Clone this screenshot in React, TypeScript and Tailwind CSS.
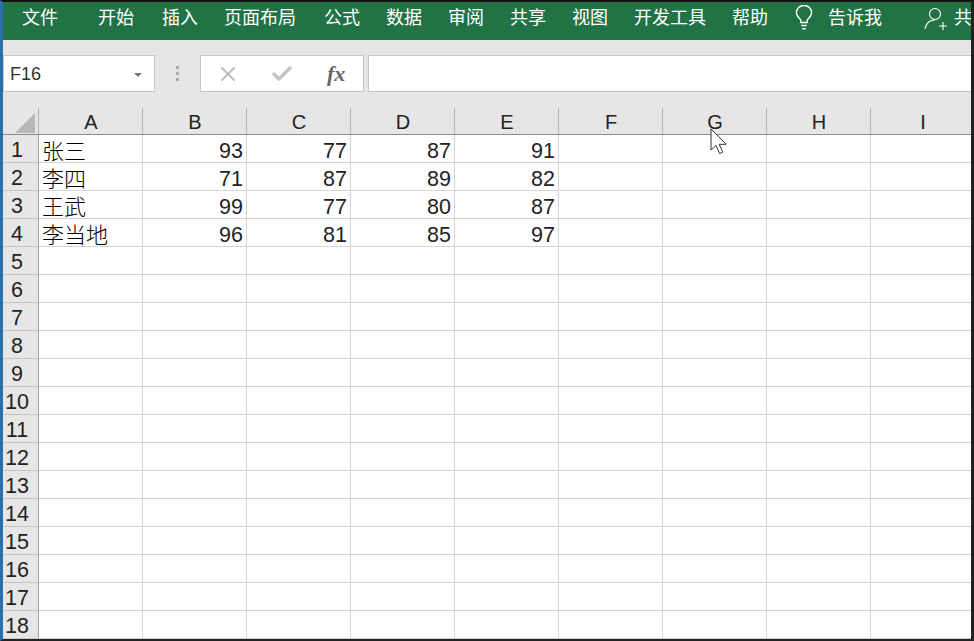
import { X, Check } from 'lucide-react';

const cjk = "font-['Noto_Sans_CJK_SC','Liberation_Sans',sans-serif]";
const cols = ['A', 'B', 'C', 'D', 'E', 'F', 'G', 'H', 'I'];
const data: [string, number, number, number, number][] = [
  ['张三', 93, 77, 87, 91],
  ['李四', 71, 87, 89, 82],
  ['王武', 99, 77, 80, 87],
  ['李当地', 96, 81, 85, 97],
];
const rows = Array.from({ length: 18 }, (_, i) => i + 1);

function Tab({ label, className = '' }: { label: string; className?: string }) {
  return <span className={`shrink-0 text-[18px] leading-[24px] text-white ${className}`}>{label}</span>;
}

function Row({ n }: { n: number }) {
  const row = data[n - 1];
  return (
    <div className="flex h-[28px] shrink-0">
      <div className="flex w-[36px] shrink-0 items-center border-r border-b border-r-[#9f9f9f] border-b-[#c6c6c6] bg-[#e6e6e6] pl-[2px] pt-[4px] text-[21.5px] text-[#222]">
        <span className="w-[24px] text-center">{n}</span>
      </div>
      {cols.map((c, i) => {
        const v = row ? row[i] : undefined;
        return (
          <div
            key={c}
            className={`flex h-full shrink-0 items-center border-r border-b border-[#d4d4d4] ${
              i === 0 ? 'w-[104px] pl-[3px] pt-[1px]' : 'w-[104px] justify-end pr-[3px] pt-[6px]'
            }`}
          >
            {i === 0 && v !== undefined ? (
              <span className={`${cjk} text-[22px] font-light leading-none text-[#000]`}>{v}</span>
            ) : (
              v !== undefined && <span className="text-[21.5px] leading-none text-[#222]">{v}</span>
            )}
          </div>
        );
      })}
    </div>
  );
}

export default function App() {
  return (
    <div className="relative flex h-[641px] w-[974px] flex-col overflow-hidden border-t-2 border-r-[3px] border-b-2 border-l-[3px] border-t-[#111] border-r-[#222] border-b-[#222] border-l-[#2a6fa8] bg-white font-['Liberation_Sans',sans-serif]">
      {/* ribbon tabs */}
      <div className={`${cjk} flex h-[38px] shrink-0 items-center overflow-hidden bg-[#217346] pb-[11px] pl-[19px]`}>
        <Tab label="文件" className="mr-[40px]" />
        <div className="flex shrink-0 gap-[26px]">
          <Tab label="开始" className="mr-[2px]" />
          <Tab label="插入" />
          <Tab label="页面布局" className="mr-[2px]" />
          <Tab label="公式" />
          <Tab label="数据" />
          <Tab label="审阅" />
          <Tab label="共享" />
          <Tab label="视图" />
          <Tab label="开发工具" />
          <Tab label="帮助" />
        </div>
        <svg viewBox="0 0 20 28" className="ml-[27px] mt-[4px] h-[25px] w-[18px] shrink-0 fill-none stroke-white" strokeWidth="1.6">
          <path d="M6.5 19.5v-2.2C6 15 1.5 13.5 1.5 8.5a8.500 8 0 0 1 17 0c0 5-4.500 6.500-5 8.800v2.200z" />
          <path d="M7 23h6M8 26.500h4" />
        </svg>
        <Tab label="告诉我" className="ml-[15px]" />
        <svg viewBox="0 0 24 24" className="ml-[42px] mt-[7px] h-[24px] w-[24px] shrink-0 fill-none stroke-white" strokeWidth="1.1">
          <circle cx="11" cy="7" r="5.5" />
          <path d="M1 22c1-5 4-9 10-9 M15 19h8 M19 15v8" />
        </svg>
        <Tab label="共" className="ml-[6px]" />
      </div>

      {/* formula bar */}
      <div className="flex h-[68px] shrink-0 items-start bg-[#e6e6e6] pt-[15px]">
        <div className="flex h-[37px] w-[152px] shrink-0 items-center justify-between border border-[#c6c6c6] bg-white pt-[2px] pr-[12px] pl-[6px] text-[18px] text-[#333]">
          F16
          <span className="h-0 w-0 border-x-[4px] border-t-[4px] border-x-transparent border-t-[#777]" />
        </div>
        <div className="flex h-[37px] w-[45px] shrink-0 flex-col items-center justify-center gap-[3px]">
          <span className="h-[3px] w-[3px] bg-[#aaa]" />
          <span className="h-[3px] w-[3px] bg-[#aaa]" />
          <span className="h-[3px] w-[3px] bg-[#aaa]" />
        </div>
        <div className="flex h-[37px] w-[164px] shrink-0 items-center border border-[#c6c6c6] bg-white">
          <X className="ml-[15px] h-[24px] w-[24px] text-[#bdbdbd]" strokeWidth={2} />
          <Check className="ml-[30px] h-[24px] w-[24px] text-[#c4c4c4]" strokeWidth={3.5} />
          <span className="ml-[33px] font-['Liberation_Serif',serif] text-[22px] font-bold italic text-[#666]">fx</span>
        </div>
        <div className="ml-[4px] h-[37px] flex-1 border border-r-0 border-[#c6c6c6] bg-white" />
      </div>

      {/* column headers */}
      <div className="flex h-[27px] shrink-0 border-b border-[#8c8c8c] bg-[#e6e6e6]">
        <div className="relative w-[36px] shrink-0 border-r border-[#b5b5b5]">
          <span className="absolute right-[3px] bottom-[1px] h-[20px] w-[20px] bg-[#b8b8b8] [clip-path:polygon(100%_0,100%_100%,0_100%)]" />
        </div>
        {cols.map((c) => (
          <div
            key={c}
            className="flex w-[104px] shrink-0 items-center justify-center border-r border-[#b5b5b5] pl-[1px] pt-[2px] text-[20px] text-[#222]"
          >
            {c}
          </div>
        ))}
      </div>

      {/* sheet */}
      <div className="flex min-h-0 flex-1 flex-col overflow-hidden">
        {rows.map((n) => (
          <Row key={n} n={n} />
        ))}
      </div>

      {/* mouse pointer */}
      <svg viewBox="0 0 18 28" className="absolute top-[126px] left-[707px] h-[28px] w-[18px]">
        <path d="M1 1v21l5-4.5 3.6 8 3.2-1.4-3.6-7.8h7z" fill="#fff" stroke="#333" strokeWidth="1" />
      </svg>
    </div>
  );
}
